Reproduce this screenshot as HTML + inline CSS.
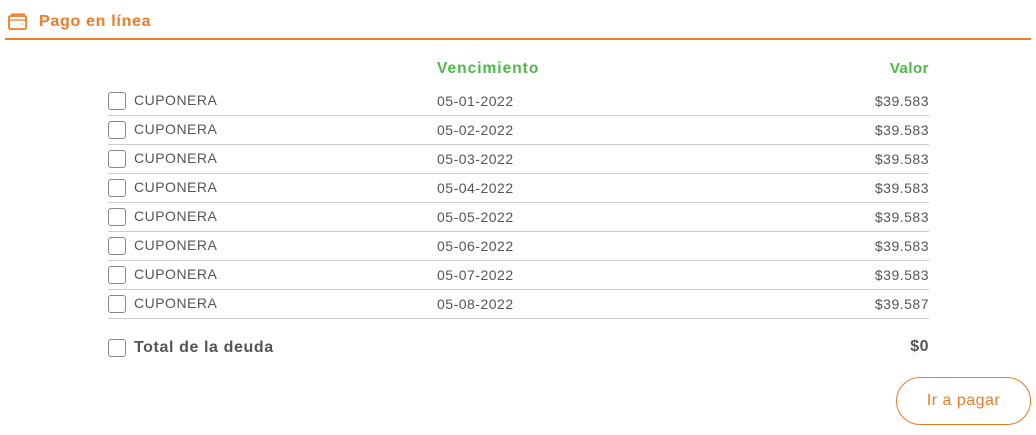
<!DOCTYPE html><html><head><style>
body{margin:0;width:1036px;height:435px;background:#fff;font-family:"Liberation Sans",sans-serif;position:relative;overflow:hidden;color:#555}
.t{position:absolute;white-space:nowrap}
.cb{position:absolute;left:108px;width:16px;height:16px;border:1px solid #888;border-radius:3px}
.ln{position:absolute;left:108px;width:821px;height:1px;background:#ccc}
.r{font-size:14px;color:#555;letter-spacing:0.5px}
.v{right:107px;text-align:right}
</style></head><body>
<svg style="position:absolute;left:8px;top:13px" width="20" height="18" viewBox="0 0 20 18"><rect x="1" y="3" width="17" height="13" rx="1.5" fill="none" stroke="#f07a28" stroke-width="1.8"/><path d="M3 1.2h14" stroke="#f07a28" stroke-width="1.5"/><path d="M1 7h17" stroke="#f07a28" stroke-width="1.2"/><circle cx="14" cy="11" r="0.8" fill="#f07a28"/></svg>
<div class="t" style="left:39px;top:13px;font-size:16px;font-weight:bold;color:#f07a28;letter-spacing:0.7px">Pago en línea</div>
<div style="position:absolute;left:5px;top:38px;width:1026px;height:2px;background:#f07a28"></div>
<div class="t" style="left:437px;top:60px;font-size:15.5px;font-weight:bold;color:#4cb848;letter-spacing:1px">Vencimiento</div>
<div class="t v" style="top:60px;font-size:15px;font-weight:bold;color:#4cb848;letter-spacing:0.5px">Valor</div>
<div id="rows"></div>
<div class="cb" style="top:339px"></div>
<div class="t" style="left:134px;top:339px;font-size:16px;font-weight:bold;color:#555;letter-spacing:0.6px">Total de la deuda</div>
<div class="t v" style="top:338px;font-size:16px;font-weight:bold;color:#555;letter-spacing:0.5px">$0</div>
<div style="position:absolute;left:896px;top:377px;width:135px;height:48px;border:1px solid #f07a28;border-radius:24px;box-sizing:border-box;color:#f07a28;font-size:16px;letter-spacing:0.5px;text-align:center;line-height:46px">Ir a pagar</div>
<script>
var h='';for(var i=0;i<8;i++){var y=92+i*29;h+='<div class="cb" style="top:'+y+'px"></div><div class="t r" style="left:134px;top:'+y+'px">CUPONERA</div><div class="t r" style="left:437px;top:'+(y+1)+'px">05-0'+(i+1)+'-2022</div><div class="t r v" style="top:'+(y+1)+'px">$39.58'+(i==7?'7':'3')+'</div><div class="ln" style="top:'+(y+23)+'px"></div>';}
document.getElementById('rows').innerHTML=h;
</script>
</body></html>
